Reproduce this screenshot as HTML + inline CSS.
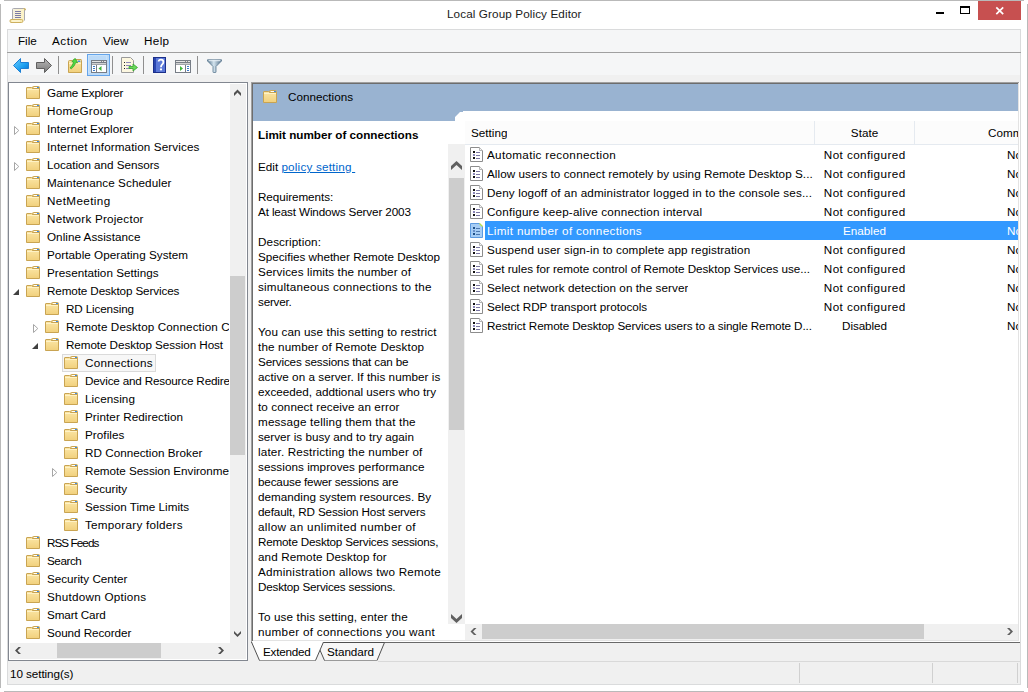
<!DOCTYPE html>
<html><head><meta charset="utf-8"><style>
html,body{margin:0;padding:0}
body{width:1028px;height:692px;position:relative;overflow:hidden;background:#fff;font-family:"Liberation Sans",sans-serif;font-size:11.7px;color:#000}
.a{position:absolute}
.t{position:absolute;white-space:nowrap;line-height:18px;height:18px}
.r{position:absolute;white-space:nowrap;line-height:19px;height:19px;overflow:hidden}
.fi{position:absolute;width:14px;height:13px}
.pi{position:absolute;width:13px;height:15px}
.d{position:absolute;left:258px;white-space:nowrap;line-height:15px}
</style></head><body>
<svg width="0" height="0" style="position:absolute">
<defs>
<linearGradient id="fg" x1="0" y1="0" x2="0" y2="1"><stop offset="0" stop-color="#fbe6a6"/><stop offset="1" stop-color="#f1d07c"/></linearGradient>



</defs>
</svg>
<div class="a" style="left:4px;top:0px;width:1020px;height:1px;background:#b9b9b9;"></div>
<div class="a" style="left:0px;top:4px;width:1px;height:684px;background:#b9b9b9;"></div>
<div class="a" style="left:1027px;top:4px;width:1px;height:684px;background:#b9b9b9;"></div>
<div class="a" style="left:4px;top:691px;width:1020px;height:1px;background:#b9b9b9;"></div>
<svg class="a" style="left:9px;top:7px" width="18" height="18"><defs><linearGradient id="pp" x1="0" y1="0" x2="1" y2="0"><stop offset="0" stop-color="#f4f0e0"/><stop offset="1" stop-color="#fdf3c4"/></linearGradient></defs><path d="M3.5,13 V2.5 Q3.5,1.5 4.5,1.5 H14.5 Q15.5,1.5 15.5,2.5 V13.5" fill="url(#pp)" stroke="#a9a9b0"/><path d="M14.5,1.5 Q16.5,1.5 16.3,3.3" fill="none" stroke="#c8aa50" stroke-width="1.2"/><rect x="6" y="4" width="6" height="1" fill="#7c7aa6"/><rect x="6" y="6" width="6" height="1" fill="#7c7aa6"/><rect x="6" y="8" width="6" height="1" fill="#7c7aa6"/><rect x="6" y="10" width="6" height="1" fill="#7c7aa6"/><path d="M2,12.5 H12.5 Q14,12.5 14,14 Q14,15.5 12.5,15.5 H2 Q1,15.5 1,14 Q1,12.5 2,12.5 Z" fill="#f8eab0" stroke="#cdb060"/><rect x="3" y="13.5" width="8" height="1" fill="#fffbe8"/></svg>
<div class="a" style="left:447px;top:5px;line-height:18px;white-space:nowrap;color:#1a1a1a;letter-spacing:0.109px">Local Group Policy Editor</div>
<div class="a" style="left:978px;top:1px;width:43px;height:19px;background:#c75050;"></div>
<svg class="a" style="left:978px;top:1px" width="43" height="19"><path d="M18.3,6.3 L25.2,13.2 M25.2,6.3 L18.3,13.2" stroke="#fff" stroke-width="1.7"/></svg>
<div class="a" style="left:960px;top:6px;width:8px;height:5px;border:1px solid #000;border-top-width:2px"></div>
<div class="a" style="left:936px;top:12px;width:8px;height:2px;background:#000;"></div>
<div class="a" style="left:7px;top:29px;width:1012px;height:23px;background:#f5f6f7;border:1px solid #dadbdc;border-bottom:none"></div>
<div class="a" style="left:7px;top:52px;width:1014px;height:1px;background:#a0a0a0;"></div>
<div class="t" style="left:18px;top:32px;letter-spacing:-0.048px">File</div>
<div class="t" style="left:52px;top:32px;letter-spacing:0.523px">Action</div>
<div class="t" style="left:103px;top:32px;letter-spacing:0.092px">View</div>
<div class="t" style="left:144px;top:32px;letter-spacing:0.351px">Help</div>
<div class="a" style="left:7px;top:53px;width:1012px;height:22px;background:#f5f6f7;border-left:1px solid #dadbdc;border-right:1px solid #dadbdc"></div>
<div class="a" style="left:7px;top:75px;width:1012px;height:586px;background:#f0f0f0;border-left:1px solid #dadbdc;border-right:1px solid #dadbdc"></div>
<div class="a" style="left:7px;top:661px;width:1012px;height:23px;background:#f0f0f0;border:1px solid #dadbdc;border-top:none"></div>
<div class="t" style="left:10px;top:665px;letter-spacing:-0.076px">10 setting(s)</div>
<div class="a" style="left:378px;top:661px;width:642px;height:1px;background:#d9d9d9;"></div>
<div class="a" style="left:799px;top:663px;width:1px;height:20px;background:#d0d0d0;"></div>
<div class="a" style="left:932px;top:663px;width:1px;height:20px;background:#d0d0d0;"></div>
<div class="a" style="left:1017px;top:663px;width:1px;height:20px;background:#d0d0d0;"></div>
<div class="a" style="left:58px;top:56px;width:1px;height:18px;background:#8f8f8f;"></div>
<div class="a" style="left:112px;top:56px;width:1px;height:18px;background:#8f8f8f;"></div>
<div class="a" style="left:143px;top:56px;width:1px;height:18px;background:#8f8f8f;"></div>
<div class="a" style="left:197px;top:56px;width:1px;height:18px;background:#8f8f8f;"></div>
<svg class="a" style="left:12px;top:57px" width="18" height="17">
<defs><linearGradient id="bk" x1="0" y1="0" x2="1" y2="1"><stop offset="0" stop-color="#6fd0ff"/><stop offset="0.6" stop-color="#1a9ef0"/><stop offset="1" stop-color="#0565c8"/></linearGradient></defs>
<path d="M1.5,8.5 L8.5,1.5 V5.5 H16.5 V11.5 H8.5 V15.5 Z" fill="url(#bk)" stroke="#1b7fd4" stroke-linejoin="round"/></svg>
<svg class="a" style="left:35px;top:57px" width="18" height="17">
<defs><linearGradient id="fw" x1="0" y1="0" x2="0" y2="1"><stop offset="0" stop-color="#b8b8b8"/><stop offset="1" stop-color="#7a7a7a"/></linearGradient></defs>
<path d="M16.5,8.5 L9.5,1.5 V5.5 H1.5 V11.5 H9.5 V15.5 Z" fill="url(#fw)" stroke="#5f5f5f" stroke-linejoin="round"/></svg>
<svg class="a" style="left:68px;top:58px" width="15" height="16">
<path d="M0.5,14.5 V3.5 Q0.5,2.5 1.5,2.5 H4 L5,3.5 V2.5 Q5,1.5 6,1.5 H13 Q13.5,1.5 13.5,2.5 V14.5 Z" fill="url(#fg)" stroke="#c9a452"/>
<rect x="1" y="5" width="12" height="1" fill="#fff2c0"/>
<rect x="9.5" y="2.5" width="3" height="1.5" rx="0.7" fill="#4a90e2"/>
<path d="M7.2,0.3 L9.6,4.8 L7.8,4.6 Q6.6,8.2 3.4,10.8 L2,10 Q4.8,7.2 5.6,4.2 L3.8,3.6 Z" fill="#4fd944" stroke="#2c9f24" stroke-width="0.7" stroke-linejoin="round"/>
</svg>
<div class="a" style="left:87px;top:54px;width:21px;height:20px;background:#bcdaf7;border:1px solid #64a4ea"></div>
<div class="a" style="left:88px;top:55px;width:19px;height:18px;background:transparent;box-shadow:inset 0 0 0 1px #c8e2fa"></div>
<svg class="a" style="left:91px;top:60px" width="16" height="13">
<rect x="0.5" y="0.5" width="15" height="12" fill="#fff" stroke="#777d86"/>
<rect x="1" y="1" width="14" height="1" fill="#e4e4e4"/><rect x="10" y="1" width="1" height="1" fill="#888"/><rect x="12" y="1" width="1" height="1" fill="#888"/>
<rect x="1" y="2" width="14" height="1" fill="#777d86"/>
<rect x="1" y="3" width="14" height="1" fill="#d0d0d0"/>
<rect x="1" y="4" width="14" height="1" fill="#a0a4aa"/>
<rect x="5" y="5" width="1" height="7" fill="#777d86"/>
<rect x="2" y="6" width="2" height="1" fill="#3b78c8"/><rect x="2" y="8" width="2" height="1" fill="#3b78c8"/><rect x="2" y="10" width="2" height="1" fill="#3b78c8"/>
<path d="M7.5,8.5 L10.5,6 V11 Z" fill="#3fb53a"/></svg>
<svg class="a" style="left:121px;top:57px" width="17" height="16">
<path d="M0.5,0.5 H9.5 L12.5,3.5 V15.5 H0.5 Z" fill="#fcf7e0" stroke="#9a9a9a"/>
<rect x="3" y="5" width="1" height="1" fill="#222"/><rect x="3" y="8" width="1" height="1" fill="#222"/><rect x="3" y="11" width="1" height="1" fill="#222"/>
<rect x="5" y="5" width="5" height="1" fill="#8d88b8"/><rect x="5" y="8" width="5" height="1" fill="#8d88b8"/><rect x="5" y="11" width="5" height="1" fill="#8d88b8"/>
<path d="M8,9.5 H12 V7 L16.5,10.5 L12,14 V11.5 H8 Z" fill="#6ad85a" stroke="#34a52b" stroke-width="0.8"/></svg>
<svg class="a" style="left:153px;top:57px" width="13" height="16">
<rect x="0" y="0" width="13" height="16" fill="#2a46b0"/><rect x="3" y="1" width="9" height="14" fill="#5b78d8"/>
<rect x="0.5" y="0.5" width="12" height="15" fill="none" stroke="#1b2f8a"/>
<path d="M5.6,4.6 Q5.6,2.6 8,2.6 Q10.4,2.6 10.4,5 Q10.4,6.5 9.1,7.4 Q8,8.2 8,10.2" fill="none" stroke="#fff" stroke-width="1.8"/><circle cx="8" cy="12.4" r="1.1" fill="#fff"/></svg>
<svg class="a" style="left:175px;top:60px" width="16" height="13">
<rect x="0.5" y="0.5" width="15" height="12" fill="#fff" stroke="#777d86"/>
<rect x="1" y="1" width="14" height="1" fill="#e4e4e4"/><rect x="10" y="1" width="1" height="1" fill="#888"/><rect x="12" y="1" width="1" height="1" fill="#888"/>
<rect x="1" y="2" width="14" height="1" fill="#777d86"/>
<rect x="1" y="3" width="14" height="1" fill="#d0d0d0"/>
<rect x="1" y="4" width="14" height="1" fill="#a0a4aa"/>
<rect x="10" y="5" width="1" height="7" fill="#777d86"/>
<rect x="12" y="6" width="2" height="1" fill="#3b78c8"/><rect x="12" y="8" width="2" height="1" fill="#3b78c8"/><rect x="12" y="10" width="2" height="1" fill="#3b78c8"/>
<path d="M5,6 L8,8.5 L5,11 Z" fill="#3fb53a"/></svg>
<svg class="a" style="left:207px;top:59px" width="16" height="14">
<defs><linearGradient id="fl" x1="0" y1="0" x2="1" y2="0"><stop offset="0" stop-color="#50708a"/><stop offset="0.45" stop-color="#d4e4ee"/><stop offset="1" stop-color="#4e6c86"/></linearGradient></defs>
<path d="M0.5,0.8 H14.5 V2 L9,7.5 V13 Q9,13.5 8.5,13.5 H6.5 Q6,13.5 6,13 V7.5 L0.5,2 Z" fill="url(#fl)" stroke="#5c7890" stroke-width="0.8"/>
<rect x="1.5" y="1.2" width="12" height="1" fill="#eef5fa"/></svg>
<div class="a" style="left:8px;top:82px;width:238px;height:577px;background:#fff;border:1px solid #828790"></div>
<div class="a" style="left:9px;top:83px;width:220px;height:560px;overflow:hidden">
<svg class="fi" style="left:17px;top:3px"><path d="M6.5,3 V1.5 Q6.5,0.5 7.5,0.5 H12.5 Q13.5,0.5 13.5,1.5 V3" fill="#f3d68a" stroke="#c9a452"/><rect x="8" y="1" width="3" height="1" fill="#fff"/><rect x="11" y="1" width="2" height="1" fill="#3d8ee6"/><path d="M0.5,12.5 V2 Q0.5,1.5 1,1.5 H5.5 L6.5,2.5 H13.5 V12.5 Z" fill="url(#fg)" stroke="#c9a452"/><rect x="1" y="3" width="12" height="1" fill="#fff6d0" opacity="0.8"/></svg>
<div class="t" style="left:38px;top:1px;letter-spacing:-0.176px">Game Explorer</div>
<svg class="fi" style="left:17px;top:21px"><path d="M6.5,3 V1.5 Q6.5,0.5 7.5,0.5 H12.5 Q13.5,0.5 13.5,1.5 V3" fill="#f3d68a" stroke="#c9a452"/><rect x="8" y="1" width="3" height="1" fill="#fff"/><rect x="11" y="1" width="2" height="1" fill="#3d8ee6"/><path d="M0.5,12.5 V2 Q0.5,1.5 1,1.5 H5.5 L6.5,2.5 H13.5 V12.5 Z" fill="url(#fg)" stroke="#c9a452"/><rect x="1" y="3" width="12" height="1" fill="#fff6d0" opacity="0.8"/></svg>
<div class="t" style="left:38px;top:19px;letter-spacing:0.304px">HomeGroup</div>
<svg class="a" style="left:5px;top:43px" width="7" height="10"><path d="M0.5,0.5 L4.8,4.5 L0.5,8.5 Z" fill="#fff" stroke="#a6a6a6"/></svg>
<svg class="fi" style="left:17px;top:39px"><path d="M6.5,3 V1.5 Q6.5,0.5 7.5,0.5 H12.5 Q13.5,0.5 13.5,1.5 V3" fill="#f3d68a" stroke="#c9a452"/><rect x="8" y="1" width="3" height="1" fill="#fff"/><rect x="11" y="1" width="2" height="1" fill="#3d8ee6"/><path d="M0.5,12.5 V2 Q0.5,1.5 1,1.5 H5.5 L6.5,2.5 H13.5 V12.5 Z" fill="url(#fg)" stroke="#c9a452"/><rect x="1" y="3" width="12" height="1" fill="#fff6d0" opacity="0.8"/></svg>
<div class="t" style="left:38px;top:37px;letter-spacing:0.006px">Internet Explorer</div>
<svg class="fi" style="left:17px;top:57px"><path d="M6.5,3 V1.5 Q6.5,0.5 7.5,0.5 H12.5 Q13.5,0.5 13.5,1.5 V3" fill="#f3d68a" stroke="#c9a452"/><rect x="8" y="1" width="3" height="1" fill="#fff"/><rect x="11" y="1" width="2" height="1" fill="#3d8ee6"/><path d="M0.5,12.5 V2 Q0.5,1.5 1,1.5 H5.5 L6.5,2.5 H13.5 V12.5 Z" fill="url(#fg)" stroke="#c9a452"/><rect x="1" y="3" width="12" height="1" fill="#fff6d0" opacity="0.8"/></svg>
<div class="t" style="left:38px;top:55px;letter-spacing:0.106px">Internet Information Services</div>
<svg class="a" style="left:5px;top:79px" width="7" height="10"><path d="M0.5,0.5 L4.8,4.5 L0.5,8.5 Z" fill="#fff" stroke="#a6a6a6"/></svg>
<svg class="fi" style="left:17px;top:75px"><path d="M6.5,3 V1.5 Q6.5,0.5 7.5,0.5 H12.5 Q13.5,0.5 13.5,1.5 V3" fill="#f3d68a" stroke="#c9a452"/><rect x="8" y="1" width="3" height="1" fill="#fff"/><rect x="11" y="1" width="2" height="1" fill="#3d8ee6"/><path d="M0.5,12.5 V2 Q0.5,1.5 1,1.5 H5.5 L6.5,2.5 H13.5 V12.5 Z" fill="url(#fg)" stroke="#c9a452"/><rect x="1" y="3" width="12" height="1" fill="#fff6d0" opacity="0.8"/></svg>
<div class="t" style="left:38px;top:73px;letter-spacing:-0.035px">Location and Sensors</div>
<svg class="fi" style="left:17px;top:93px"><path d="M6.5,3 V1.5 Q6.5,0.5 7.5,0.5 H12.5 Q13.5,0.5 13.5,1.5 V3" fill="#f3d68a" stroke="#c9a452"/><rect x="8" y="1" width="3" height="1" fill="#fff"/><rect x="11" y="1" width="2" height="1" fill="#3d8ee6"/><path d="M0.5,12.5 V2 Q0.5,1.5 1,1.5 H5.5 L6.5,2.5 H13.5 V12.5 Z" fill="url(#fg)" stroke="#c9a452"/><rect x="1" y="3" width="12" height="1" fill="#fff6d0" opacity="0.8"/></svg>
<div class="t" style="left:38px;top:91px;letter-spacing:0.079px">Maintenance Scheduler</div>
<svg class="fi" style="left:17px;top:111px"><path d="M6.5,3 V1.5 Q6.5,0.5 7.5,0.5 H12.5 Q13.5,0.5 13.5,1.5 V3" fill="#f3d68a" stroke="#c9a452"/><rect x="8" y="1" width="3" height="1" fill="#fff"/><rect x="11" y="1" width="2" height="1" fill="#3d8ee6"/><path d="M0.5,12.5 V2 Q0.5,1.5 1,1.5 H5.5 L6.5,2.5 H13.5 V12.5 Z" fill="url(#fg)" stroke="#c9a452"/><rect x="1" y="3" width="12" height="1" fill="#fff6d0" opacity="0.8"/></svg>
<div class="t" style="left:38px;top:109px;letter-spacing:0.380px">NetMeeting</div>
<svg class="fi" style="left:17px;top:129px"><path d="M6.5,3 V1.5 Q6.5,0.5 7.5,0.5 H12.5 Q13.5,0.5 13.5,1.5 V3" fill="#f3d68a" stroke="#c9a452"/><rect x="8" y="1" width="3" height="1" fill="#fff"/><rect x="11" y="1" width="2" height="1" fill="#3d8ee6"/><path d="M0.5,12.5 V2 Q0.5,1.5 1,1.5 H5.5 L6.5,2.5 H13.5 V12.5 Z" fill="url(#fg)" stroke="#c9a452"/><rect x="1" y="3" width="12" height="1" fill="#fff6d0" opacity="0.8"/></svg>
<div class="t" style="left:38px;top:127px;letter-spacing:0.226px">Network Projector</div>
<svg class="fi" style="left:17px;top:147px"><path d="M6.5,3 V1.5 Q6.5,0.5 7.5,0.5 H12.5 Q13.5,0.5 13.5,1.5 V3" fill="#f3d68a" stroke="#c9a452"/><rect x="8" y="1" width="3" height="1" fill="#fff"/><rect x="11" y="1" width="2" height="1" fill="#3d8ee6"/><path d="M0.5,12.5 V2 Q0.5,1.5 1,1.5 H5.5 L6.5,2.5 H13.5 V12.5 Z" fill="url(#fg)" stroke="#c9a452"/><rect x="1" y="3" width="12" height="1" fill="#fff6d0" opacity="0.8"/></svg>
<div class="t" style="left:38px;top:145px;letter-spacing:0.031px">Online Assistance</div>
<svg class="fi" style="left:17px;top:165px"><path d="M6.5,3 V1.5 Q6.5,0.5 7.5,0.5 H12.5 Q13.5,0.5 13.5,1.5 V3" fill="#f3d68a" stroke="#c9a452"/><rect x="8" y="1" width="3" height="1" fill="#fff"/><rect x="11" y="1" width="2" height="1" fill="#3d8ee6"/><path d="M0.5,12.5 V2 Q0.5,1.5 1,1.5 H5.5 L6.5,2.5 H13.5 V12.5 Z" fill="url(#fg)" stroke="#c9a452"/><rect x="1" y="3" width="12" height="1" fill="#fff6d0" opacity="0.8"/></svg>
<div class="t" style="left:38px;top:163px;letter-spacing:0.032px">Portable Operating System</div>
<svg class="fi" style="left:17px;top:183px"><path d="M6.5,3 V1.5 Q6.5,0.5 7.5,0.5 H12.5 Q13.5,0.5 13.5,1.5 V3" fill="#f3d68a" stroke="#c9a452"/><rect x="8" y="1" width="3" height="1" fill="#fff"/><rect x="11" y="1" width="2" height="1" fill="#3d8ee6"/><path d="M0.5,12.5 V2 Q0.5,1.5 1,1.5 H5.5 L6.5,2.5 H13.5 V12.5 Z" fill="url(#fg)" stroke="#c9a452"/><rect x="1" y="3" width="12" height="1" fill="#fff6d0" opacity="0.8"/></svg>
<div class="t" style="left:38px;top:181px;letter-spacing:0.025px">Presentation Settings</div>
<svg class="a" style="left:4px;top:206px" width="7" height="7"><path d="M6,0 V6 H0 Z" fill="#404040"/></svg>
<svg class="fi" style="left:17px;top:201px"><path d="M6.5,3 V1.5 Q6.5,0.5 7.5,0.5 H12.5 Q13.5,0.5 13.5,1.5 V3" fill="#f3d68a" stroke="#c9a452"/><rect x="8" y="1" width="3" height="1" fill="#fff"/><rect x="11" y="1" width="2" height="1" fill="#3d8ee6"/><path d="M0.5,12.5 V2 Q0.5,1.5 1,1.5 H5.5 L6.5,2.5 H13.5 V12.5 Z" fill="url(#fg)" stroke="#c9a452"/><rect x="1" y="3" width="12" height="1" fill="#fff6d0" opacity="0.8"/></svg>
<div class="t" style="left:38px;top:199px;letter-spacing:-0.123px">Remote Desktop Services</div>
<svg class="fi" style="left:36px;top:219px"><path d="M6.5,3 V1.5 Q6.5,0.5 7.5,0.5 H12.5 Q13.5,0.5 13.5,1.5 V3" fill="#f3d68a" stroke="#c9a452"/><rect x="8" y="1" width="3" height="1" fill="#fff"/><rect x="11" y="1" width="2" height="1" fill="#3d8ee6"/><path d="M0.5,12.5 V2 Q0.5,1.5 1,1.5 H5.5 L6.5,2.5 H13.5 V12.5 Z" fill="url(#fg)" stroke="#c9a452"/><rect x="1" y="3" width="12" height="1" fill="#fff6d0" opacity="0.8"/></svg>
<div class="t" style="left:57px;top:217px;letter-spacing:-0.138px">RD Licensing</div>
<svg class="a" style="left:24px;top:241px" width="7" height="10"><path d="M0.5,0.5 L4.8,4.5 L0.5,8.5 Z" fill="#fff" stroke="#a6a6a6"/></svg>
<svg class="fi" style="left:36px;top:237px"><path d="M6.5,3 V1.5 Q6.5,0.5 7.5,0.5 H12.5 Q13.5,0.5 13.5,1.5 V3" fill="#f3d68a" stroke="#c9a452"/><rect x="8" y="1" width="3" height="1" fill="#fff"/><rect x="11" y="1" width="2" height="1" fill="#3d8ee6"/><path d="M0.5,12.5 V2 Q0.5,1.5 1,1.5 H5.5 L6.5,2.5 H13.5 V12.5 Z" fill="url(#fg)" stroke="#c9a452"/><rect x="1" y="3" width="12" height="1" fill="#fff6d0" opacity="0.8"/></svg>
<div class="t" style="left:57px;top:235px;letter-spacing:0.096px">Remote Desktop Connection Client</div>
<svg class="a" style="left:23px;top:260px" width="7" height="7"><path d="M6,0 V6 H0 Z" fill="#404040"/></svg>
<svg class="fi" style="left:36px;top:255px"><path d="M6.5,3 V1.5 Q6.5,0.5 7.5,0.5 H12.5 Q13.5,0.5 13.5,1.5 V3" fill="#f3d68a" stroke="#c9a452"/><rect x="8" y="1" width="3" height="1" fill="#fff"/><rect x="11" y="1" width="2" height="1" fill="#3d8ee6"/><path d="M0.5,12.5 V2 Q0.5,1.5 1,1.5 H5.5 L6.5,2.5 H13.5 V12.5 Z" fill="url(#fg)" stroke="#c9a452"/><rect x="1" y="3" width="12" height="1" fill="#fff6d0" opacity="0.8"/></svg>
<div class="t" style="left:57px;top:253px;letter-spacing:-0.079px">Remote Desktop Session Host</div>
<div class="a" style="left:53px;top:271px;width:92px;height:16px;background:#f7f7f7;border:1px solid #dadada"></div>
<svg class="fi" style="left:55px;top:273px"><path d="M6.5,3 V1.5 Q6.5,0.5 7.5,0.5 H12.5 Q13.5,0.5 13.5,1.5 V3" fill="#f3d68a" stroke="#c9a452"/><rect x="8" y="1" width="3" height="1" fill="#fff"/><rect x="11" y="1" width="2" height="1" fill="#3d8ee6"/><path d="M0.5,12.5 V2 Q0.5,1.5 1,1.5 H5.5 L6.5,2.5 H13.5 V12.5 Z" fill="url(#fg)" stroke="#c9a452"/><rect x="1" y="3" width="12" height="1" fill="#fff6d0" opacity="0.8"/></svg>
<div class="t" style="left:76px;top:271px;letter-spacing:0.262px">Connections</div>
<svg class="fi" style="left:55px;top:291px"><path d="M6.5,3 V1.5 Q6.5,0.5 7.5,0.5 H12.5 Q13.5,0.5 13.5,1.5 V3" fill="#f3d68a" stroke="#c9a452"/><rect x="8" y="1" width="3" height="1" fill="#fff"/><rect x="11" y="1" width="2" height="1" fill="#3d8ee6"/><path d="M0.5,12.5 V2 Q0.5,1.5 1,1.5 H5.5 L6.5,2.5 H13.5 V12.5 Z" fill="url(#fg)" stroke="#c9a452"/><rect x="1" y="3" width="12" height="1" fill="#fff6d0" opacity="0.8"/></svg>
<div class="t" style="left:76px;top:289px;letter-spacing:-0.181px">Device and Resource Redirection</div>
<svg class="fi" style="left:55px;top:309px"><path d="M6.5,3 V1.5 Q6.5,0.5 7.5,0.5 H12.5 Q13.5,0.5 13.5,1.5 V3" fill="#f3d68a" stroke="#c9a452"/><rect x="8" y="1" width="3" height="1" fill="#fff"/><rect x="11" y="1" width="2" height="1" fill="#3d8ee6"/><path d="M0.5,12.5 V2 Q0.5,1.5 1,1.5 H5.5 L6.5,2.5 H13.5 V12.5 Z" fill="url(#fg)" stroke="#c9a452"/><rect x="1" y="3" width="12" height="1" fill="#fff6d0" opacity="0.8"/></svg>
<div class="t" style="left:76px;top:307px;letter-spacing:0.064px">Licensing</div>
<svg class="fi" style="left:55px;top:327px"><path d="M6.5,3 V1.5 Q6.5,0.5 7.5,0.5 H12.5 Q13.5,0.5 13.5,1.5 V3" fill="#f3d68a" stroke="#c9a452"/><rect x="8" y="1" width="3" height="1" fill="#fff"/><rect x="11" y="1" width="2" height="1" fill="#3d8ee6"/><path d="M0.5,12.5 V2 Q0.5,1.5 1,1.5 H5.5 L6.5,2.5 H13.5 V12.5 Z" fill="url(#fg)" stroke="#c9a452"/><rect x="1" y="3" width="12" height="1" fill="#fff6d0" opacity="0.8"/></svg>
<div class="t" style="left:76px;top:325px;letter-spacing:0.067px">Printer Redirection</div>
<svg class="fi" style="left:55px;top:345px"><path d="M6.5,3 V1.5 Q6.5,0.5 7.5,0.5 H12.5 Q13.5,0.5 13.5,1.5 V3" fill="#f3d68a" stroke="#c9a452"/><rect x="8" y="1" width="3" height="1" fill="#fff"/><rect x="11" y="1" width="2" height="1" fill="#3d8ee6"/><path d="M0.5,12.5 V2 Q0.5,1.5 1,1.5 H5.5 L6.5,2.5 H13.5 V12.5 Z" fill="url(#fg)" stroke="#c9a452"/><rect x="1" y="3" width="12" height="1" fill="#fff6d0" opacity="0.8"/></svg>
<div class="t" style="left:76px;top:343px;letter-spacing:0.059px">Profiles</div>
<svg class="fi" style="left:55px;top:363px"><path d="M6.5,3 V1.5 Q6.5,0.5 7.5,0.5 H12.5 Q13.5,0.5 13.5,1.5 V3" fill="#f3d68a" stroke="#c9a452"/><rect x="8" y="1" width="3" height="1" fill="#fff"/><rect x="11" y="1" width="2" height="1" fill="#3d8ee6"/><path d="M0.5,12.5 V2 Q0.5,1.5 1,1.5 H5.5 L6.5,2.5 H13.5 V12.5 Z" fill="url(#fg)" stroke="#c9a452"/><rect x="1" y="3" width="12" height="1" fill="#fff6d0" opacity="0.8"/></svg>
<div class="t" style="left:76px;top:361px;letter-spacing:0.019px">RD Connection Broker</div>
<svg class="a" style="left:43px;top:385px" width="7" height="10"><path d="M0.5,0.5 L4.8,4.5 L0.5,8.5 Z" fill="#fff" stroke="#a6a6a6"/></svg>
<svg class="fi" style="left:55px;top:381px"><path d="M6.5,3 V1.5 Q6.5,0.5 7.5,0.5 H12.5 Q13.5,0.5 13.5,1.5 V3" fill="#f3d68a" stroke="#c9a452"/><rect x="8" y="1" width="3" height="1" fill="#fff"/><rect x="11" y="1" width="2" height="1" fill="#3d8ee6"/><path d="M0.5,12.5 V2 Q0.5,1.5 1,1.5 H5.5 L6.5,2.5 H13.5 V12.5 Z" fill="url(#fg)" stroke="#c9a452"/><rect x="1" y="3" width="12" height="1" fill="#fff6d0" opacity="0.8"/></svg>
<div class="t" style="left:76px;top:379px;letter-spacing:-0.042px">Remote Session Environment</div>
<svg class="fi" style="left:55px;top:399px"><path d="M6.5,3 V1.5 Q6.5,0.5 7.5,0.5 H12.5 Q13.5,0.5 13.5,1.5 V3" fill="#f3d68a" stroke="#c9a452"/><rect x="8" y="1" width="3" height="1" fill="#fff"/><rect x="11" y="1" width="2" height="1" fill="#3d8ee6"/><path d="M0.5,12.5 V2 Q0.5,1.5 1,1.5 H5.5 L6.5,2.5 H13.5 V12.5 Z" fill="url(#fg)" stroke="#c9a452"/><rect x="1" y="3" width="12" height="1" fill="#fff6d0" opacity="0.8"/></svg>
<div class="t" style="left:76px;top:397px;letter-spacing:-0.019px">Security</div>
<svg class="fi" style="left:55px;top:417px"><path d="M6.5,3 V1.5 Q6.5,0.5 7.5,0.5 H12.5 Q13.5,0.5 13.5,1.5 V3" fill="#f3d68a" stroke="#c9a452"/><rect x="8" y="1" width="3" height="1" fill="#fff"/><rect x="11" y="1" width="2" height="1" fill="#3d8ee6"/><path d="M0.5,12.5 V2 Q0.5,1.5 1,1.5 H5.5 L6.5,2.5 H13.5 V12.5 Z" fill="url(#fg)" stroke="#c9a452"/><rect x="1" y="3" width="12" height="1" fill="#fff6d0" opacity="0.8"/></svg>
<div class="t" style="left:76px;top:415px;letter-spacing:0.010px">Session Time Limits</div>
<svg class="fi" style="left:55px;top:435px"><path d="M6.5,3 V1.5 Q6.5,0.5 7.5,0.5 H12.5 Q13.5,0.5 13.5,1.5 V3" fill="#f3d68a" stroke="#c9a452"/><rect x="8" y="1" width="3" height="1" fill="#fff"/><rect x="11" y="1" width="2" height="1" fill="#3d8ee6"/><path d="M0.5,12.5 V2 Q0.5,1.5 1,1.5 H5.5 L6.5,2.5 H13.5 V12.5 Z" fill="url(#fg)" stroke="#c9a452"/><rect x="1" y="3" width="12" height="1" fill="#fff6d0" opacity="0.8"/></svg>
<div class="t" style="left:76px;top:433px;letter-spacing:0.253px">Temporary folders</div>
<svg class="fi" style="left:17px;top:453px"><path d="M6.5,3 V1.5 Q6.5,0.5 7.5,0.5 H12.5 Q13.5,0.5 13.5,1.5 V3" fill="#f3d68a" stroke="#c9a452"/><rect x="8" y="1" width="3" height="1" fill="#fff"/><rect x="11" y="1" width="2" height="1" fill="#3d8ee6"/><path d="M0.5,12.5 V2 Q0.5,1.5 1,1.5 H5.5 L6.5,2.5 H13.5 V12.5 Z" fill="url(#fg)" stroke="#c9a452"/><rect x="1" y="3" width="12" height="1" fill="#fff6d0" opacity="0.8"/></svg>
<div class="t" style="left:38px;top:451px;letter-spacing:-0.933px">RSS Feeds</div>
<svg class="fi" style="left:17px;top:471px"><path d="M6.5,3 V1.5 Q6.5,0.5 7.5,0.5 H12.5 Q13.5,0.5 13.5,1.5 V3" fill="#f3d68a" stroke="#c9a452"/><rect x="8" y="1" width="3" height="1" fill="#fff"/><rect x="11" y="1" width="2" height="1" fill="#3d8ee6"/><path d="M0.5,12.5 V2 Q0.5,1.5 1,1.5 H5.5 L6.5,2.5 H13.5 V12.5 Z" fill="url(#fg)" stroke="#c9a452"/><rect x="1" y="3" width="12" height="1" fill="#fff6d0" opacity="0.8"/></svg>
<div class="t" style="left:38px;top:469px;letter-spacing:-0.449px">Search</div>
<svg class="fi" style="left:17px;top:489px"><path d="M6.5,3 V1.5 Q6.5,0.5 7.5,0.5 H12.5 Q13.5,0.5 13.5,1.5 V3" fill="#f3d68a" stroke="#c9a452"/><rect x="8" y="1" width="3" height="1" fill="#fff"/><rect x="11" y="1" width="2" height="1" fill="#3d8ee6"/><path d="M0.5,12.5 V2 Q0.5,1.5 1,1.5 H5.5 L6.5,2.5 H13.5 V12.5 Z" fill="url(#fg)" stroke="#c9a452"/><rect x="1" y="3" width="12" height="1" fill="#fff6d0" opacity="0.8"/></svg>
<div class="t" style="left:38px;top:487px;letter-spacing:-0.010px">Security Center</div>
<svg class="fi" style="left:17px;top:507px"><path d="M6.5,3 V1.5 Q6.5,0.5 7.5,0.5 H12.5 Q13.5,0.5 13.5,1.5 V3" fill="#f3d68a" stroke="#c9a452"/><rect x="8" y="1" width="3" height="1" fill="#fff"/><rect x="11" y="1" width="2" height="1" fill="#3d8ee6"/><path d="M0.5,12.5 V2 Q0.5,1.5 1,1.5 H5.5 L6.5,2.5 H13.5 V12.5 Z" fill="url(#fg)" stroke="#c9a452"/><rect x="1" y="3" width="12" height="1" fill="#fff6d0" opacity="0.8"/></svg>
<div class="t" style="left:38px;top:505px;letter-spacing:0.239px">Shutdown Options</div>
<svg class="fi" style="left:17px;top:525px"><path d="M6.5,3 V1.5 Q6.5,0.5 7.5,0.5 H12.5 Q13.5,0.5 13.5,1.5 V3" fill="#f3d68a" stroke="#c9a452"/><rect x="8" y="1" width="3" height="1" fill="#fff"/><rect x="11" y="1" width="2" height="1" fill="#3d8ee6"/><path d="M0.5,12.5 V2 Q0.5,1.5 1,1.5 H5.5 L6.5,2.5 H13.5 V12.5 Z" fill="url(#fg)" stroke="#c9a452"/><rect x="1" y="3" width="12" height="1" fill="#fff6d0" opacity="0.8"/></svg>
<div class="t" style="left:38px;top:523px;letter-spacing:-0.107px">Smart Card</div>
<svg class="fi" style="left:17px;top:543px"><path d="M6.5,3 V1.5 Q6.5,0.5 7.5,0.5 H12.5 Q13.5,0.5 13.5,1.5 V3" fill="#f3d68a" stroke="#c9a452"/><rect x="8" y="1" width="3" height="1" fill="#fff"/><rect x="11" y="1" width="2" height="1" fill="#3d8ee6"/><path d="M0.5,12.5 V2 Q0.5,1.5 1,1.5 H5.5 L6.5,2.5 H13.5 V12.5 Z" fill="url(#fg)" stroke="#c9a452"/><rect x="1" y="3" width="12" height="1" fill="#fff6d0" opacity="0.8"/></svg>
<div class="t" style="left:38px;top:541px;letter-spacing:-0.063px">Sound Recorder</div>
</div>
<div class="a" style="left:230px;top:84px;width:16px;height:575px;background:#f0f0f0;"></div>
<div class="a" style="left:10px;top:643px;width:220px;height:16px;background:#f0f0f0;"></div>
<div class="a" style="left:230px;top:276px;width:15px;height:179px;background:#cdcdcd;"></div>
<div class="a" style="left:57px;top:643px;width:104px;height:15px;background:#cdcdcd;"></div>
<svg class="a" style="left:10px;top:84px" width="236" height="576"><path d="M224,9 L227.5,5.5 L231,9 V12 L227.5,8.5 L224,12 Z M224,547 L227.5,550.5 L231,547 V549.5 L227.5,553 L224,549.5 Z M11,563 L7.5,566.5 L11,570 H8.5 L5,566.5 L8.5,563 Z M208,563 L211.5,566.5 L208,570 H210.5 L214,566.5 L210.5,563 Z" fill="#505050"/></svg>
<div class="a" style="left:252px;top:83px;width:767px;height:558px;background:#fff;border-left:1px solid #6d6d6d;border-top:1px solid #6d6d6d"></div>
<div class="a" style="left:253px;top:84px;width:766px;height:37px;background:#99b3d1;"></div>
<svg class="a" style="left:453px;top:109px" width="566" height="14"><path d="M10,2 H566 V14 H2 V8 L7,3 H10 Z" fill="#fff"/></svg>
<svg class="fi" style="left:263px;top:90px"><path d="M6.5,3 V1.5 Q6.5,0.5 7.5,0.5 H12.5 Q13.5,0.5 13.5,1.5 V3" fill="#f3d68a" stroke="#c9a452"/><rect x="8" y="1" width="3" height="1" fill="#fff"/><rect x="11" y="1" width="2" height="1" fill="#3d8ee6"/><path d="M0.5,12.5 V2 Q0.5,1.5 1,1.5 H5.5 L6.5,2.5 H13.5 V12.5 Z" fill="url(#fg)" stroke="#c9a452"/><rect x="1" y="3" width="12" height="1" fill="#fff6d0" opacity="0.8"/></svg>
<div class="t" style="left:288px;top:88px">Connections</div>
<div class="a" style="left:253px;top:121px;width:195px;height:520px;overflow:hidden">
<div class="a" style="left:5px;top:5px;white-space:nowrap;line-height:18px;font-weight:bold">Limit number of connections</div>
<div class="a" style="left:5px;top:37px;white-space:nowrap;line-height:18px">Edit <span style="color:#0066cc;text-decoration:underline;letter-spacing:0.2px">policy setting&nbsp;</span></div>
<div class="a" style="left:5px;top:68px;white-space:nowrap;line-height:15px;letter-spacing:-0.068px">Requirements:</div>
<div class="a" style="left:5px;top:83px;white-space:nowrap;line-height:15px;letter-spacing:-0.136px">At least Windows Server 2003</div>
<div class="a" style="left:5px;top:113px;white-space:nowrap;line-height:15px;letter-spacing:0.107px">Description:</div>
<div class="a" style="left:5px;top:128px;white-space:nowrap;line-height:15px;letter-spacing:-0.018px">Specifies whether Remote Desktop</div>
<div class="a" style="left:5px;top:143px;white-space:nowrap;line-height:15px;letter-spacing:0.102px">Services limits the number of</div>
<div class="a" style="left:5px;top:158px;white-space:nowrap;line-height:15px;letter-spacing:0.217px">simultaneous connections to the</div>
<div class="a" style="left:5px;top:173px;white-space:nowrap;line-height:15px;letter-spacing:-0.213px">server.</div>
<div class="a" style="left:5px;top:203px;white-space:nowrap;line-height:15px;letter-spacing:0.116px">You can use this setting to restrict</div>
<div class="a" style="left:5px;top:218px;white-space:nowrap;line-height:15px;letter-spacing:0.136px">the number of Remote Desktop</div>
<div class="a" style="left:5px;top:233px;white-space:nowrap;line-height:15px;letter-spacing:-0.144px">Services sessions that can be</div>
<div class="a" style="left:5px;top:248px;white-space:nowrap;line-height:15px;letter-spacing:0.047px">active on a server. If this number is</div>
<div class="a" style="left:5px;top:263px;white-space:nowrap;line-height:15px;letter-spacing:0.023px">exceeded, addtional users who try</div>
<div class="a" style="left:5px;top:278px;white-space:nowrap;line-height:15px;letter-spacing:0.091px">to connect receive an error</div>
<div class="a" style="left:5px;top:293px;white-space:nowrap;line-height:15px;letter-spacing:0.175px">message telling them that the</div>
<div class="a" style="left:5px;top:308px;white-space:nowrap;line-height:15px;letter-spacing:-0.001px">server is busy and to try again</div>
<div class="a" style="left:5px;top:323px;white-space:nowrap;line-height:15px;letter-spacing:0.166px">later. Restricting the number of</div>
<div class="a" style="left:5px;top:338px;white-space:nowrap;line-height:15px;letter-spacing:0.050px">sessions improves performance</div>
<div class="a" style="left:5px;top:353px;white-space:nowrap;line-height:15px;letter-spacing:-0.175px">because fewer sessions are</div>
<div class="a" style="left:5px;top:368px;white-space:nowrap;line-height:15px;letter-spacing:0.010px">demanding system resources. By</div>
<div class="a" style="left:5px;top:383px;white-space:nowrap;line-height:15px;letter-spacing:-0.150px">default, RD Session Host servers</div>
<div class="a" style="left:5px;top:398px;white-space:nowrap;line-height:15px;letter-spacing:0.327px">allow an unlimited number of</div>
<div class="a" style="left:5px;top:413px;white-space:nowrap;line-height:15px;letter-spacing:-0.206px">Remote Desktop Services sessions,</div>
<div class="a" style="left:5px;top:428px;white-space:nowrap;line-height:15px;letter-spacing:0.096px">and Remote Desktop for</div>
<div class="a" style="left:5px;top:443px;white-space:nowrap;line-height:15px;letter-spacing:0.239px">Administration allows two Remote</div>
<div class="a" style="left:5px;top:458px;white-space:nowrap;line-height:15px;letter-spacing:-0.216px">Desktop Services sessions.</div>
<div class="a" style="left:5px;top:488px;white-space:nowrap;line-height:15px;letter-spacing:0.121px">To use this setting, enter the</div>
<div class="a" style="left:5px;top:503px;white-space:nowrap;line-height:15px;letter-spacing:0.290px">number of connections you want</div>
</div>
<div class="a" style="left:448px;top:144px;width:17px;height:480px;background:#f0f0f0;"></div>
<div class="a" style="left:449px;top:178px;width:15px;height:252px;background:#cdcdcd;"></div>
<svg class="a" style="left:448px;top:150px" width="17" height="480"><path d="M3,16 L8.5,11 L14,16 V20 L8.5,15 L3,20 Z M3,464 L8.5,469 L14,464 V468 L8.5,473 L3,468 Z" fill="#606060"/></svg>
<div class="a" style="left:465px;top:121px;width:554px;height:520px;overflow:hidden">
<div class="a" style="left:0;top:0;width:554px;height:23px;background:#fcfcfc;border-bottom:1px solid #e5eaf0"></div>
<div class="a" style="left:349px;top:0;width:1px;height:23px;background:#e5eaf0"></div>
<div class="a" style="left:449px;top:0;width:1px;height:23px;background:#e5eaf0"></div>
<div class="r" style="left:6px;top:2px">Setting</div>
<div class="r" style="left:350px;top:2px;width:99px;text-align:center">State</div>
<div class="r" style="left:523px;top:2px">Comment</div>
<svg class="pi" style="left:5px;top:26px"><path d="M0.5,0.5 H9.5 L12.5,3.5 V14.5 H0.5 Z" fill="#fff" stroke="#8c8c8c"/><path d="M9.5,0.5 V3.5 H12.5" fill="#f4f4f4" stroke="#b4b4b4"/><rect x="3" y="4" width="2" height="2" fill="#111"/><rect x="3" y="7" width="2" height="2" fill="#8a86b8"/><rect x="3" y="10" width="2" height="2" fill="#111"/><rect x="6" y="5" width="4" height="1" fill="#7c78a4"/><rect x="6" y="8" width="4" height="1" fill="#7c78a4"/><rect x="6" y="11" width="4" height="1" fill="#7c78a4"/></svg>
<div class="r" style="left:22px;top:24px;letter-spacing:0.312px;">Automatic reconnection</div>
<div class="r" style="left:350px;top:24px;width:99px;text-align:center;letter-spacing:0.406px;text-indent:0.406px;">Not configured</div>
<div class="r" style="left:542px;top:24px;">No</div>
<svg class="pi" style="left:5px;top:45px"><path d="M0.5,0.5 H9.5 L12.5,3.5 V14.5 H0.5 Z" fill="#fff" stroke="#8c8c8c"/><path d="M9.5,0.5 V3.5 H12.5" fill="#f4f4f4" stroke="#b4b4b4"/><rect x="3" y="4" width="2" height="2" fill="#111"/><rect x="3" y="7" width="2" height="2" fill="#8a86b8"/><rect x="3" y="10" width="2" height="2" fill="#111"/><rect x="6" y="5" width="4" height="1" fill="#7c78a4"/><rect x="6" y="8" width="4" height="1" fill="#7c78a4"/><rect x="6" y="11" width="4" height="1" fill="#7c78a4"/></svg>
<div class="r" style="left:22px;top:43px;letter-spacing:0.048px;">Allow users to connect remotely by using Remote Desktop S...</div>
<div class="r" style="left:350px;top:43px;width:99px;text-align:center;letter-spacing:0.406px;text-indent:0.406px;">Not configured</div>
<div class="r" style="left:542px;top:43px;">No</div>
<svg class="pi" style="left:5px;top:64px"><path d="M0.5,0.5 H9.5 L12.5,3.5 V14.5 H0.5 Z" fill="#fff" stroke="#8c8c8c"/><path d="M9.5,0.5 V3.5 H12.5" fill="#f4f4f4" stroke="#b4b4b4"/><rect x="3" y="4" width="2" height="2" fill="#111"/><rect x="3" y="7" width="2" height="2" fill="#8a86b8"/><rect x="3" y="10" width="2" height="2" fill="#111"/><rect x="6" y="5" width="4" height="1" fill="#7c78a4"/><rect x="6" y="8" width="4" height="1" fill="#7c78a4"/><rect x="6" y="11" width="4" height="1" fill="#7c78a4"/></svg>
<div class="r" style="left:22px;top:62px;letter-spacing:0.130px;">Deny logoff of an administrator logged in to the console ses...</div>
<div class="r" style="left:350px;top:62px;width:99px;text-align:center;letter-spacing:0.406px;text-indent:0.406px;">Not configured</div>
<div class="r" style="left:542px;top:62px;">No</div>
<svg class="pi" style="left:5px;top:83px"><path d="M0.5,0.5 H9.5 L12.5,3.5 V14.5 H0.5 Z" fill="#fff" stroke="#8c8c8c"/><path d="M9.5,0.5 V3.5 H12.5" fill="#f4f4f4" stroke="#b4b4b4"/><rect x="3" y="4" width="2" height="2" fill="#111"/><rect x="3" y="7" width="2" height="2" fill="#8a86b8"/><rect x="3" y="10" width="2" height="2" fill="#111"/><rect x="6" y="5" width="4" height="1" fill="#7c78a4"/><rect x="6" y="8" width="4" height="1" fill="#7c78a4"/><rect x="6" y="11" width="4" height="1" fill="#7c78a4"/></svg>
<div class="r" style="left:22px;top:81px;letter-spacing:0.184px;">Configure keep-alive connection interval</div>
<div class="r" style="left:350px;top:81px;width:99px;text-align:center;letter-spacing:0.406px;text-indent:0.406px;">Not configured</div>
<div class="r" style="left:542px;top:81px;">No</div>
<div class="a" style="left:20px;top:100px;width:534px;height:19px;background:#3399ff"></div>
<svg class="pi" style="left:5px;top:102px"><path d="M0.5,0.5 H9.5 L12.5,3.5 V14.5 H0.5 Z" fill="#a6cdf5" stroke="#5d9ae0"/><path d="M9.5,0.5 L12.5,3.5" stroke="#b8e04a" stroke-width="1.2"/><rect x="3" y="4" width="2" height="2" fill="#1d4e86"/><rect x="3" y="7" width="2" height="2" fill="#6a90c8"/><rect x="3" y="10" width="2" height="2" fill="#1d4e86"/><rect x="6" y="5" width="4" height="1" fill="#4d78b0"/><rect x="6" y="8" width="4" height="1" fill="#4d78b0"/><rect x="6" y="11" width="4" height="1" fill="#4d78b0"/></svg>
<div class="r" style="left:22px;top:100px;letter-spacing:0.328px;color:#fff;">Limit number of connections</div>
<div class="r" style="left:350px;top:100px;width:99px;text-align:center;letter-spacing:0.016px;text-indent:0.016px;color:#fff;">Enabled</div>
<div class="r" style="left:542px;top:100px;color:#fff;">No</div>
<svg class="pi" style="left:5px;top:121px"><path d="M0.5,0.5 H9.5 L12.5,3.5 V14.5 H0.5 Z" fill="#fff" stroke="#8c8c8c"/><path d="M9.5,0.5 V3.5 H12.5" fill="#f4f4f4" stroke="#b4b4b4"/><rect x="3" y="4" width="2" height="2" fill="#111"/><rect x="3" y="7" width="2" height="2" fill="#8a86b8"/><rect x="3" y="10" width="2" height="2" fill="#111"/><rect x="6" y="5" width="4" height="1" fill="#7c78a4"/><rect x="6" y="8" width="4" height="1" fill="#7c78a4"/><rect x="6" y="11" width="4" height="1" fill="#7c78a4"/></svg>
<div class="r" style="left:22px;top:119px;letter-spacing:0.123px;">Suspend user sign-in to complete app registration</div>
<div class="r" style="left:350px;top:119px;width:99px;text-align:center;letter-spacing:0.406px;text-indent:0.406px;">Not configured</div>
<div class="r" style="left:542px;top:119px;">No</div>
<svg class="pi" style="left:5px;top:140px"><path d="M0.5,0.5 H9.5 L12.5,3.5 V14.5 H0.5 Z" fill="#fff" stroke="#8c8c8c"/><path d="M9.5,0.5 V3.5 H12.5" fill="#f4f4f4" stroke="#b4b4b4"/><rect x="3" y="4" width="2" height="2" fill="#111"/><rect x="3" y="7" width="2" height="2" fill="#8a86b8"/><rect x="3" y="10" width="2" height="2" fill="#111"/><rect x="6" y="5" width="4" height="1" fill="#7c78a4"/><rect x="6" y="8" width="4" height="1" fill="#7c78a4"/><rect x="6" y="11" width="4" height="1" fill="#7c78a4"/></svg>
<div class="r" style="left:22px;top:138px;letter-spacing:-0.019px;">Set rules for remote control of Remote Desktop Services use...</div>
<div class="r" style="left:350px;top:138px;width:99px;text-align:center;letter-spacing:0.406px;text-indent:0.406px;">Not configured</div>
<div class="r" style="left:542px;top:138px;">No</div>
<svg class="pi" style="left:5px;top:159px"><path d="M0.5,0.5 H9.5 L12.5,3.5 V14.5 H0.5 Z" fill="#fff" stroke="#8c8c8c"/><path d="M9.5,0.5 V3.5 H12.5" fill="#f4f4f4" stroke="#b4b4b4"/><rect x="3" y="4" width="2" height="2" fill="#111"/><rect x="3" y="7" width="2" height="2" fill="#8a86b8"/><rect x="3" y="10" width="2" height="2" fill="#111"/><rect x="6" y="5" width="4" height="1" fill="#7c78a4"/><rect x="6" y="8" width="4" height="1" fill="#7c78a4"/><rect x="6" y="11" width="4" height="1" fill="#7c78a4"/></svg>
<div class="r" style="left:22px;top:157px;letter-spacing:0.070px;">Select network detection on the server</div>
<div class="r" style="left:350px;top:157px;width:99px;text-align:center;letter-spacing:0.406px;text-indent:0.406px;">Not configured</div>
<div class="r" style="left:542px;top:157px;">No</div>
<svg class="pi" style="left:5px;top:178px"><path d="M0.5,0.5 H9.5 L12.5,3.5 V14.5 H0.5 Z" fill="#fff" stroke="#8c8c8c"/><path d="M9.5,0.5 V3.5 H12.5" fill="#f4f4f4" stroke="#b4b4b4"/><rect x="3" y="4" width="2" height="2" fill="#111"/><rect x="3" y="7" width="2" height="2" fill="#8a86b8"/><rect x="3" y="10" width="2" height="2" fill="#111"/><rect x="6" y="5" width="4" height="1" fill="#7c78a4"/><rect x="6" y="8" width="4" height="1" fill="#7c78a4"/><rect x="6" y="11" width="4" height="1" fill="#7c78a4"/></svg>
<div class="r" style="left:22px;top:176px;letter-spacing:-0.002px;">Select RDP transport protocols</div>
<div class="r" style="left:350px;top:176px;width:99px;text-align:center;letter-spacing:0.406px;text-indent:0.406px;">Not configured</div>
<div class="r" style="left:542px;top:176px;">No</div>
<svg class="pi" style="left:5px;top:197px"><path d="M0.5,0.5 H9.5 L12.5,3.5 V14.5 H0.5 Z" fill="#fff" stroke="#8c8c8c"/><path d="M9.5,0.5 V3.5 H12.5" fill="#f4f4f4" stroke="#b4b4b4"/><rect x="3" y="4" width="2" height="2" fill="#111"/><rect x="3" y="7" width="2" height="2" fill="#8a86b8"/><rect x="3" y="10" width="2" height="2" fill="#111"/><rect x="6" y="5" width="4" height="1" fill="#7c78a4"/><rect x="6" y="8" width="4" height="1" fill="#7c78a4"/><rect x="6" y="11" width="4" height="1" fill="#7c78a4"/></svg>
<div class="r" style="left:22px;top:195px;letter-spacing:-0.115px;">Restrict Remote Desktop Services users to a single Remote D...</div>
<div class="r" style="left:350px;top:195px;width:99px;text-align:center;letter-spacing:-0.098px;text-indent:-0.098px;">Disabled</div>
<div class="r" style="left:542px;top:195px;">No</div>
</div>
<div class="a" style="left:465px;top:624px;width:554px;height:17px;background:#f0f0f0;"></div>
<div class="a" style="left:482px;top:624px;width:442px;height:15px;background:#cdcdcd;"></div>
<svg class="a" style="left:460px;top:620px" width="560" height="20"><path d="M16.5,8 L13,11.5 L16.5,15 H14 L10.5,11.5 L14,8 Z M547,8 L550.5,11.5 L547,15 H549.5 L553,11.5 L549.5,8 Z" fill="#606060"/></svg>
<div class="a" style="left:251px;top:82px;width:769px;height:1px;background:#a0a0a0;"></div>
<div class="a" style="left:251px;top:82px;width:1px;height:560px;background:#a0a0a0;"></div>
<div class="a" style="left:1018px;top:83px;width:1px;height:558px;background:#e3e3e3;"></div>
<div class="a" style="left:253px;top:640px;width:766px;height:1px;background:#e3e3e3;"></div>
<div class="a" style="left:1019px;top:82px;width:1px;height:560px;background:#fff;"></div>
<div class="a" style="left:252px;top:641px;width:768px;height:1px;background:#fff;"></div>
<div class="a" style="left:251px;top:642px;width:769px;height:1px;background:#696969;"></div>
<svg class="a" style="left:251px;top:641px" width="140" height="21">
<path d="M72.5,1.5 H133.5 L126,19.5 H73.5 L68,8 Z" fill="#f7f7f7"/>
<path d="M72.5,1.5 H133.5 L126,19.5 H73.5 L68.5,8" fill="none" stroke="#505050"/>
<path d="M0.5,1 L8.5,19.5 H64.5 L72.5,1" fill="#fff"/>
<path d="M0.5,1 L8.5,19.5 H64.5 L72.5,1" fill="none" stroke="#505050"/>
<rect x="1" y="0" width="71" height="1" fill="#fff"/>
<path d="M8.5,19.5 H64.5 M73.5,19.5 H126" stroke="#9a9a9a"/>
</svg>
<div class="t" style="left:263px;top:643px;letter-spacing:-0.242px">Extended</div>
<div class="t" style="left:327px;top:643px;letter-spacing:-0.048px">Standard</div>
</body></html>
